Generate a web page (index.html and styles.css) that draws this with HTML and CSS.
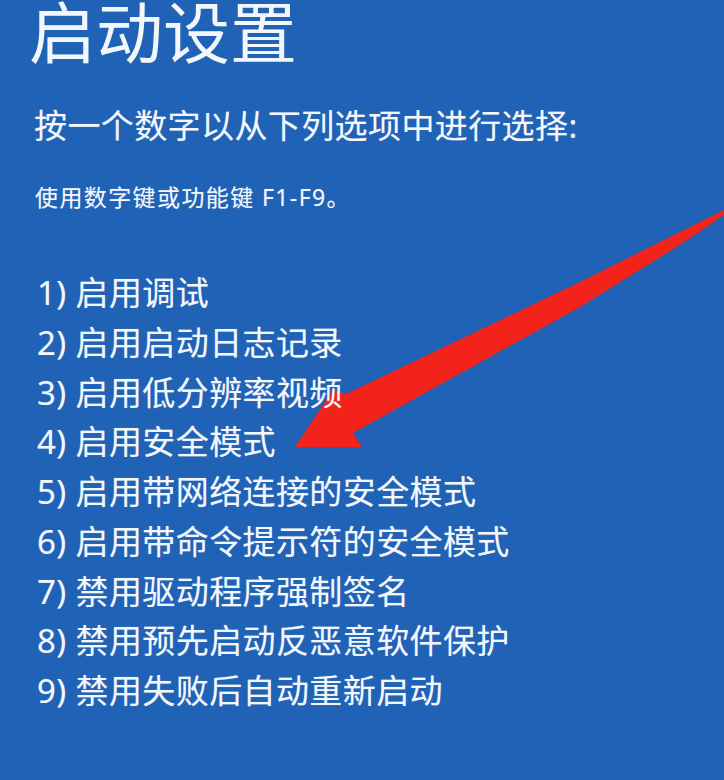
FILE: index.html
```html
<!DOCTYPE html>
<html lang="zh-CN">
<head>
<meta charset="utf-8">
<title>启动设置</title>
<link rel="stylesheet" href="styles.css">
</head>
<body>
<div class="screen">
  <svg class="arrow" width="724" height="780" viewBox="0 0 724 780" aria-hidden="true">
    <path d="M724,210 L580,282 L346,394 L333,390 L295,447 L362,447 L353,433 L580,307 L662,256 Q710,226 724,214 Z" fill="#f3221b"/>
  </svg>
  <div class="content">
    <h1 class="title">启动设置</h1>
    <p class="subtitle">按一个数字以从下列选项中进行选择:</p>
    <p class="hint">使用数字键或功能键 F1-F9。</p>
    <ol class="options">
      <li class="option">1) 启用调试</li>
      <li class="option">2) 启用启动日志记录</li>
      <li class="option">3) 启用低分辨率视频</li>
      <li class="option">4) 启用安全模式</li>
      <li class="option">5) 启用带网络连接的安全模式</li>
      <li class="option">6) 启用带命令提示符的安全模式</li>
      <li class="option">7) 禁用驱动程序强制签名</li>
      <li class="option">8) 禁用预先启动反恶意软件保护</li>
      <li class="option">9) 禁用失败后自动重新启动</li>
    </ol>
  </div>
</div>
</body>
</html>
```
FILE: styles.css
```css
html, body {
  margin: 0;
  padding: 0;
  background: #1f62b6;
}

.screen {
  position: relative;
  width: 724px;
  height: 780px;
  overflow: hidden;
  background: #1f62b6;
  font-family: "Noto Sans", "Noto Sans CJK SC", sans-serif;
  color: #f3f7fc;
}

.arrow {
  position: absolute;
  left: 0;
  top: 0;
  z-index: 0;
}

.content {
  position: relative;
  z-index: 1;
  display: flex;
  flex-direction: column;
  padding-left: 29px;
}

.title {
  margin: 0;
  font-size: 67px;
  line-height: 64px;
  font-weight: 400;
}

.subtitle {
  margin: 42px 0 0 5px;
  font-size: 33px;
  line-height: 40px;
  letter-spacing: 0.4px;
  text-shadow: 0 0 1px rgba(255, 255, 255, 0.35);
}

.hint {
  margin: 36px 0 0 6px;
  font-size: 23px;
  line-height: 30px;
  letter-spacing: 1.4px;
  text-shadow: 0 0 1px rgba(255, 255, 255, 0.35);
}

.options {
  list-style: none;
  margin: 56px 0 0 8px;
  padding: 0;
  display: flex;
  flex-direction: column;
}

.option {
  font-size: 33px;
  line-height: 49.75px;
  letter-spacing: 0.4px;
  text-shadow: 0 0 1px rgba(255, 255, 255, 0.35);
}
```
